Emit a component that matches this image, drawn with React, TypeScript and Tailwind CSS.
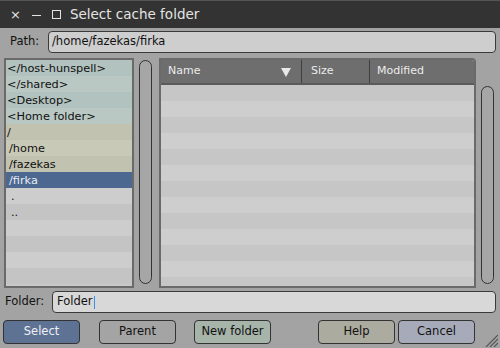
import React from "react";

const dirs: { name: string; bg: string; indent?: boolean }[] = [
    { name: "</host-hunspell>", bg: "bg-[#b2c2be]" },
    { name: "</shared>", bg: "bg-[#bac8c4]" },
    { name: "<Desktop>", bg: "bg-[#b2c2be]" },
    { name: "<Home folder>", bg: "bg-[#bac8c4]" },
    { name: "/", bg: "bg-[#c2c2b0]" },
    { name: "/home", bg: "bg-[#c9c9b8]", indent: true },
    { name: "/fazekas", bg: "bg-[#c2c2b0]", indent: true },
];

const Scroll = ({ className }: { className: string }) => (
    <div className={`w-[13px] rounded-full border border-[#333] bg-[#a6a6a6] ${className}`} />
);

export default function App() {
    return (
        <div className="w-[500px] h-[348px] bg-[#a3a3a3] flex flex-col overflow-hidden text-[#111]" style={{ fontFamily: "'DejaVu Sans', sans-serif" }}>
            {/* title bar */}
            <div className="h-[28px] bg-[#333333] border-t border-[#555] flex items-center text-[#e4e4e4] shrink-0">
                <span className="ml-[10px] text-[13px] leading-none">×</span>
                <span className="ml-[11px] w-[9px] h-[1px] bg-[#e4e4e4] mt-[1px]" />
                <span className="ml-[11px] w-[9px] h-[9px] border border-[#e4e4e4]" />
                <span className="ml-[9px] text-[13.5px]">Select cache folder</span>
            </div>

            {/* path */}
            <div className="flex items-center mt-[3px] h-[22px] pr-[4px]">
                <span className="w-[48px] pl-[10px] text-[11.5px]">Path:</span>
                <div className="flex-1 h-full rounded-[4px] border border-[#3a3a3a] bg-[#cecece] flex items-center px-[3px] text-[11.5px]">
                    /home/fazekas/firka
                </div>
            </div>

            {/* lists */}
            <div className="flex mt-[5px] h-[230px] pl-[4px]">
                <div className="w-[130px] h-full border-2 border-[#6a6a6a] bg-[#c8c8c8] flex flex-col text-[11.3px]">
                    {dirs.map((d) => (
                        <div key={d.name} className={`h-[16px] shrink-0 flex items-center pt-[3px] ${d.bg} ${d.indent ? "pl-[3px]" : "pl-[1px]"}`}>
                            {d.name}
                        </div>
                    ))}
                    <div className="h-[16px] shrink-0 flex items-center pt-[3px] bg-[#4c6891] text-[#e8ecf2] pl-[3px]">/firka</div>
                    <div className="h-[16px] shrink-0 flex items-center pt-[3px] bg-[#cdcdcd] pl-[5px]">.</div>
                    <div className="h-[16px] shrink-0 flex items-center pt-[3px] bg-[#c4c4c4] pl-[5px]">..</div>
                    {[0, 1, 2, 3].map((i) => (
                        <div key={i} className={`h-[16px] shrink-0 ${i % 2 ? "bg-[#c4c4c4]" : "bg-[#cdcdcd]"}`} />
                    ))}
                </div>
                <Scroll className="ml-[5px] mt-[2px] h-[224px]" />
                <div className="ml-[7px] w-[317px] h-full border-2 border-[#6a6a6a] rounded-tr-[4px] bg-[#c6c6c6] flex flex-col overflow-hidden">
                    <div className="h-[25px] shrink-0 bg-[#6e6e6e] border-b-2 border-[#5a5a5a] flex text-[11px] text-[#ececec]">
                        <div className="w-[141px] flex items-center justify-between pl-[7px] pr-[10px] border-r border-[#3e3e3e]">
                            <span>Name</span>
                            <svg width="10" height="10" viewBox="0 0 10 10"><path d="M0 1h10L5 10z" fill="#e8e8e8" /></svg>
                        </div>
                        <div className="w-[68px] flex items-center pl-[9px] border-r border-[#3e3e3e]">Size</div>
                        <div className="flex-1 flex items-center pl-[7px]">Modified</div>
                    </div>
                    {Array.from({ length: 13 }).map((_, i) => (
                        <div key={i} className={`h-[16px] shrink-0 ${i % 2 ? "bg-[#cecece]" : "bg-[#c6c6c6]"}`} />
                    ))}
                </div>
                <Scroll className="ml-[5px] mt-[28px] h-[198px]" />
            </div>

            {/* folder */}
            <div className="flex items-center mt-[3px] h-[22px] pr-[4px]">
                <span className="w-[52px] pl-[5px] text-[11.5px]">Folder:</span>
                <div className="flex-1 h-full rounded-[4px] border border-[#3a3a3a] bg-[#d8d8d8] flex items-center px-[4px] text-[11.5px]">
                    Folder<span className="w-[1px] h-[13px] bg-[#3a8ee6] ml-[1px]" />
                </div>
            </div>

            {/* buttons */}
            <div className="flex items-center mt-[7px] h-[24px] pl-[3px] text-[11.5px] relative">
                <button className="w-[77px] h-full rounded-[4px] border border-[#333] bg-[#5e7294] text-[#eef0f4]">Select</button>
                <button className="ml-[19px] w-[77px] h-full rounded-[4px] border border-[#333] bg-[#a4a4a4]">Parent</button>
                <button className="ml-[18px] w-[77px] h-full rounded-[4px] border border-[#333] bg-[#a6b4aa]">New folder</button>
                <button className="ml-[47px] w-[77px] h-full rounded-[4px] border border-[#333] bg-[#abab9f]">Help</button>
                <button className="ml-[3px] w-[77px] h-full rounded-[4px] border border-[#333] bg-[#a7abb9]">Cancel</button>
                <svg className="absolute right-[2px] bottom-[-3px]" width="14" height="14" viewBox="0 0 14 14">
                    <path d="M14 2L2 14M14 6L6 14M14 10L10 14" stroke="#555" strokeWidth="1.2" />
                </svg>
            </div>
        </div>
    );
}
